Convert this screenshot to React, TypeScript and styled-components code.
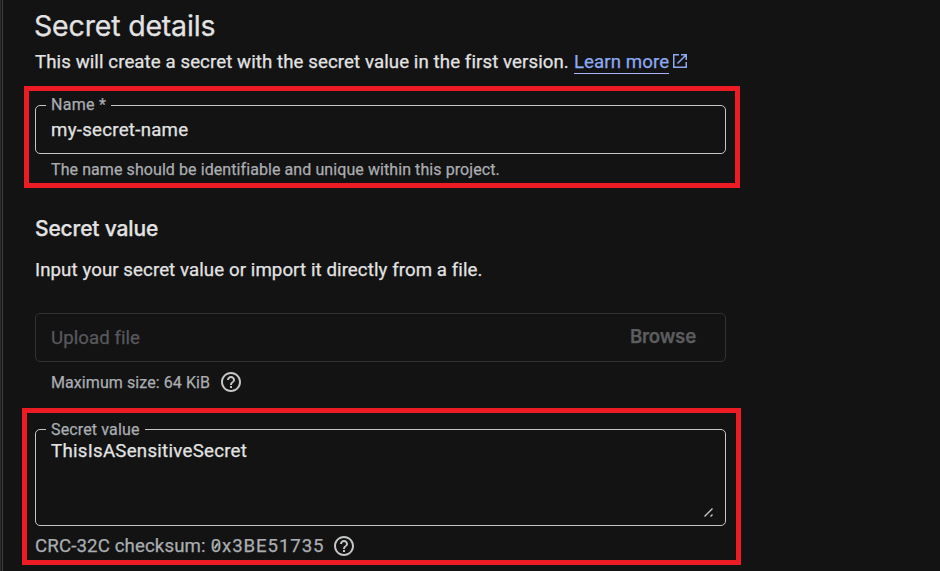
import React from 'react';
import styled, { createGlobalStyle } from 'styled-components';

const GlobalStyle = createGlobalStyle`
  *, *::before, *::after { box-sizing: border-box; }
  html, body { margin: 0; background: #131314; overflow: hidden; }
  body { font-family: Roboto, "Liberation Sans", sans-serif; color: #e3e3e3; -webkit-text-stroke: 0.25px currentColor; }
`;

const Page = styled.div`
  display: flex;
  width: 940px;
  height: 571px;
  background: #131314;
  overflow: hidden;
`;

const Rail = styled.div`
  flex: none;
  width: 3px;
  border-left: 1px solid #2d2e31;
  border-right: 1px solid #3c4043;
`;

const Content = styled.main`
  display: flex;
  flex-direction: column;
  align-items: flex-start;
  width: 740px;
  white-space: nowrap;
`;

const Title = styled.h1`
  margin: 9px 0 0 31px;
  height: 34px;
  font: 400 28.5px/34px Inter, sans-serif;
  letter-spacing: -0.18px;
`;

const Subtitle = styled.h2`
  margin: 27px 0 0 32px;
  height: 28px;
  font: 500 21px/28px Inter, sans-serif;
  letter-spacing: -0.15px;
`;

const Paragraph = styled.p<{ $top: number }>`
  display: flex;
  margin: ${(p) => p.$top}px 0 0 32px;
  height: 26px;
  font-size: 18.67px;
  line-height: 26px;
  letter-spacing: 0.085px;
`;

const Link = styled.a`
  display: inline-flex;
  gap: 3px;
  margin-left: 5px;
  color: #8caaf0;
`;

const LinkText = styled.span`
  height: 25px;
  border-bottom: 1px solid #a8b4fa;
`;

const LinkIcon = styled.svg`
  margin-top: 4px;
`;

const Highlight = styled.section<{ $top: number; $left: number; $width: number; $height: number; $pad: string }>`
  display: flex;
  flex-direction: column;
  flex: none;
  margin: ${(p) => p.$top}px 0 0 ${(p) => p.$left}px;
  width: ${(p) => p.$width}px;
  height: ${(p) => p.$height}px;
  padding: ${(p) => p.$pad};
  border: 5px solid #ed1c24;
`;

const Field = styled.fieldset<{ $height: number }>`
  flex: none;
  min-width: 0;
  width: 691px;
  height: ${(p) => p.$height}px;
  margin: 0;
  padding: 0 11px 0 10px;
  border: 1px solid #c4c7c5;
  border-radius: 5px;
`;

const Legend = styled.legend<{ $line: number; $spacing: number }>`
  height: 18px;
  padding: 0 5px;
  color: #aaadb1;
  font-size: 16px;
  line-height: ${(p) => p.$line}px;
  letter-spacing: ${(p) => p.$spacing}px;
`;

const Value = styled.div<{ $top: number }>`
  height: 24px;
  margin: ${(p) => p.$top}px 0 0 5px;
  font-size: 18.67px;
  line-height: 24px;
  letter-spacing: 0.27px;
`;

const Helper = styled.div<{ $top: number }>`
  display: flex;
  align-items: center;
  gap: 10px;
  margin: ${(p) => p.$top}px 0 0 16px;
  height: 22px;
  color: #aaadb1;
  font-size: 16px;
  line-height: 22px;
  letter-spacing: 0.08px;
`;

const SizeLimit = styled.span`
  padding-top: 2px;
`;

const Upload = styled.div`
  display: flex;
  align-items: center;
  justify-content: space-between;
  width: 691px;
  height: 49px;
  margin: 30px 0 0 32px;
  padding: 0 29px 0 15px;
  border: 1px solid #303134;
  border-radius: 5px;
  color: #58595d;
  font-size: 18.67px;
  letter-spacing: 0.05px;
`;

const Browse = styled.span`
  margin-top: -1px;
  font: 600 18.67px/24px Inter, sans-serif;
  letter-spacing: -0.2px;
  color: #5c5d5f;
`;

const UploadHelp = styled.div`
  margin-left: 32px;
`;

const Resize = styled.svg`
  display: block;
  margin: 44px 0 0 auto;
`;

const Checksum = styled.div`
  display: flex;
  align-items: center;
  height: 26px;
  margin-top: 7px;
  color: #aaadb1;
  font-size: 18.67px;
  line-height: 26px;
  letter-spacing: 0.12px;
`;

const Code = styled.span`
  margin: 0 9px 0 5px;
  letter-spacing: 0.88px;
`;

const Zero = styled.span`
  position: relative;
  &::after {
    content: '';
    position: absolute;
    left: 2.5px;
    top: 10px;
    width: 6px;
    height: 1.5px;
    background: #aaadb1;
    transform: rotate(-55deg);
  }
`;

const HelpIcon = () => (
  <svg width="22" height="22" viewBox="1 1 22 22" fill="#c4c7c5">
    <path d="M11 18h2v-2h-2v2zm1-16C6.48 2 2 6.48 2 12s4.48 10 10 10 10-4.48 10-10S17.52 2 12 2zm0 18c-4.41 0-8-3.59-8-8s3.59-8 8-8 8 3.59 8 8-3.59 8-8 8zm0-14c-2.21 0-4 1.79-4 4h2c0-1.1.9-2 2-2s2 .9 2 2c0 2-3 1.75-3 5h2c0-2.25 3-2.5 3-5 0-2.21-1.79-4-4-4z" />
  </svg>
);

export default function App() {
  return (
    <>
      <GlobalStyle />
      <Page>
        <Rail />
        <Content>
          <Title>Secret details</Title>
          <Paragraph $top={6}>
            <span>This will create a secret with the secret value in the first version.</span>
            <Link>
              <LinkText>Learn more</LinkText>
              <LinkIcon width="16" height="16" viewBox="0 0 16 16" fill="none" stroke="currentColor" strokeWidth="1.5">
                <path d="M7 1.75H1.75v12.5h12.5V9M9 1.75h5.25V7M14 2L5.5 10.5" />
              </LinkIcon>
            </Link>
          </Paragraph>
          <Highlight $top={11} $left={21} $width={716} $height={102} $pad="5px 0 0 6px">
            <Field $height={58}>
              <Legend $line={18} $spacing={0.3}>Name *</Legend>
              <Value $top={4}>my-secret-name</Value>
            </Field>
            <Helper $top={5}>The name should be identifiable and unique within this project.</Helper>
          </Highlight>
          <Subtitle>Secret value</Subtitle>
          <Paragraph $top={14}>Input your secret value or import it directly from a file.</Paragraph>
          <Upload>
            <span>Upload file</span>
            <Browse>Browse</Browse>
          </Upload>
          <UploadHelp>
            <Helper $top={9}>
              <SizeLimit>Maximum size: 64 KiB</SizeLimit>
              <HelpIcon />
            </Helper>
          </UploadHelp>
          <Highlight $top={15} $left={19} $width={719} $height={157} $pad="7px 0 0 8px">
            <Field $height={106}>
              <Legend $line={20} $spacing={0.14}>Secret value</Legend>
              <Value $top={1}>ThisIsASensitiveSecret</Value>
              <Resize width="10" height="10" viewBox="0 0 10 10" stroke="#c4c7c5" strokeWidth="1.4">
                <path d="M.5 9.5L8.5 1.5M6.5 9.5L8.5 7.5" />
              </Resize>
            </Field>
            <Checksum>
              <span>CRC-32C checksum:</span>
              <Code><Zero>0</Zero>x3BE51735</Code>
              <HelpIcon />
            </Checksum>
          </Highlight>
        </Content>
      </Page>
    </>
  );
}
